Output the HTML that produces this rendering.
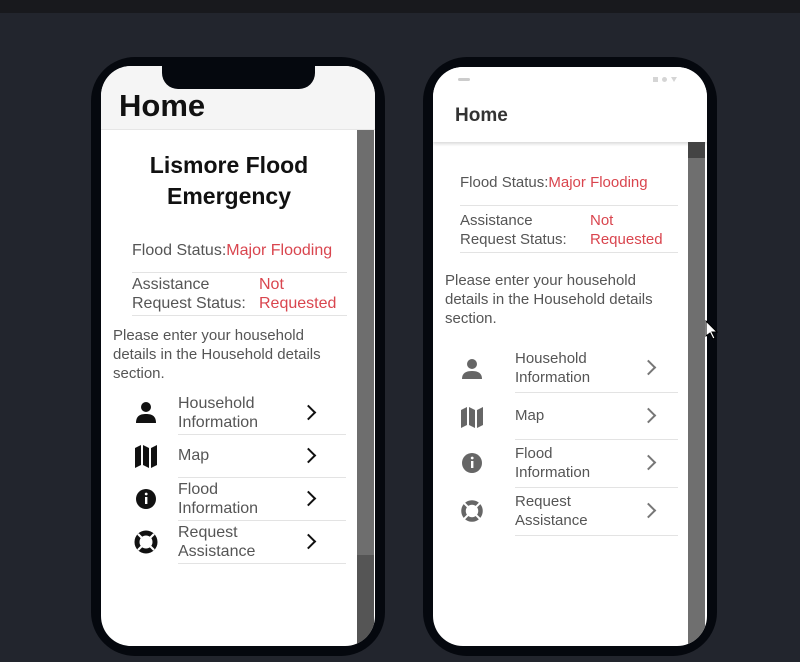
<!DOCTYPE html>
<html><head><style>
*{margin:0;padding:0;box-sizing:border-box}
body{width:800px;height:662px;background:#22252d;position:relative;overflow:hidden;font-family:"Liberation Sans",Roboto,sans-serif}
.a{position:absolute}
.top{left:0;top:0;width:800px;height:13px;background:#18191d}
.frame{background:#05080e;border-radius:44px}
.scr{background:#fff;border-radius:30px;overflow:hidden}
.t{position:absolute;white-space:nowrap;color:#555;font-weight:300}
.r{color:#d9454e}
.ln{position:absolute;height:1px;background:#e3e3e3}
.chev{position:absolute;width:11px;height:11px;border-right:2px solid #111;border-bottom:2px solid #111;transform:rotate(-45deg)}
</style></head><body>
<div class="a top"></div>

<!-- LEFT PHONE -->
<div class="a frame" style="left:91px;top:57px;width:294px;height:599px"></div>
<div class="a scr" style="left:101px;top:66px;width:274px;height:580px">
  <div class="a" style="left:0;top:0;width:274px;height:64px;background:#f5f5f5;border-bottom:1px solid #e6e6e6"></div>
  <div class="a" style="left:61px;top:0;width:153px;height:23px;background:#05080e;border-radius:0 0 16px 16px"></div>
  <div class="t" style="left:18px;top:22px;font-size:31px;font-weight:700;color:#111">Home</div>
  <div class="a" style="left:256px;top:64px;width:17px;height:516px;background:#6e6e6e"></div>
  <div class="a" style="left:256px;top:489px;width:17px;height:91px;background:#555"></div>
  <div class="t" style="left:0;width:256px;text-align:center;top:84px;font-size:23px;font-weight:700;color:#111;line-height:31px">Lismore Flood<br>Emergency</div>
  <div class="t" style="left:31px;top:176px;font-size:16px">Flood Status:<span class="r">Major Flooding</span></div>
  <div class="ln" style="left:31px;top:206px;width:215px"></div>
  <div class="t" style="left:31px;top:209px;font-size:16px;line-height:19px">Assistance<br>Request Status:</div>
  <div class="t r" style="left:158px;top:209px;font-size:16px;line-height:19px">Not<br>Requested</div>
  <div class="ln" style="left:31px;top:249px;width:215px"></div>
  <div class="t" style="left:12px;top:260px;font-size:15px;line-height:19px">Please enter your household<br>details in the Household details<br>section.</div>
  <div class="t" style="left:77px;top:328px;font-size:16px;line-height:19px">Household<br>Information</div>
  <div class="ln" style="left:77px;top:368px;width:168px"></div>
  <div class="t" style="left:77px;top:381px;font-size:16px">Map</div>
  <div class="ln" style="left:77px;top:411px;width:168px"></div>
  <div class="t" style="left:77px;top:414px;font-size:16px;line-height:19px">Flood<br>Information</div>
  <div class="ln" style="left:77px;top:454px;width:168px"></div>
  <div class="t" style="left:77px;top:457px;font-size:16px;line-height:19px">Request<br>Assistance</div>
  <div class="ln" style="left:77px;top:497px;width:168px"></div>
  <div class="chev" style="left:202px;top:341px"></div>
  <div class="chev" style="left:202px;top:384px"></div>
  <div class="chev" style="left:202px;top:427px"></div>
  <div class="chev" style="left:202px;top:470px"></div>
  <svg class="a" style="left:33px;top:335px" width="24" height="160" viewBox="0 0 24 160">
    <circle cx="12" cy="6" r="5" fill="#111"/><path d="M2 22c0-7 4-9 10-9s10 2 10 9z" fill="#111"/>
    <path d="M1 47l6-3v20l-6 3z M9 44l6 3v20l-6-3z M17 47l6-3v20l-6 3z" fill="#111"/>
    <circle cx="12" cy="98" r="10" fill="#111"/><rect x="11" y="96" width="2.4" height="7" fill="#fff"/><circle cx="12.2" cy="93" r="1.4" fill="#fff"/>
    <circle cx="12" cy="141" r="9" fill="none" stroke="#111" stroke-width="5"/><circle cx="12" cy="141" r="3" fill="#fff"/>
    <path d="M4 133l5 5M20 133l-5 5M4 149l5-5M20 149l-5-5" stroke="#fff" stroke-width="2.2"/>
  </svg>
</div>

<!-- RIGHT PHONE -->
<div class="a frame" style="left:423px;top:57px;width:294px;height:599px"></div>
<div class="a scr" style="left:433px;top:67px;width:274px;height:579px">
  <div class="a" style="left:0;top:0;width:274px;height:75px;background:#fff;box-shadow:0 2px 3px rgba(0,0,0,.15)"></div>
  <div class="a" style="left:25px;top:11px;width:12px;height:3px;background:#ccc;border-radius:2px"></div>
  <div class="a" style="left:220px;top:10px;width:5px;height:5px;background:#d5d5d5"></div>
  <div class="a" style="left:229px;top:10px;width:5px;height:5px;background:#d5d5d5;border-radius:50%"></div>
  <div class="a" style="left:238px;top:10px;width:0;height:0;border-left:3px solid transparent;border-right:3px solid transparent;border-top:5px solid #d5d5d5"></div>
  <div class="t" style="left:22px;top:38px;font-size:19px;font-weight:700;color:#333">Home</div>
  <div class="a" style="left:255px;top:75px;width:17px;height:504px;background:#6f6f6f"></div>
  <div class="a" style="left:255px;top:75px;width:17px;height:16px;background:#444"></div>
  <div class="t" style="left:27px;top:107px;font-size:15px">Flood Status:<span class="r">Major Flooding</span></div>
  <div class="ln" style="left:27px;top:138px;width:218px"></div>
  <div class="t" style="left:27px;top:144px;font-size:15px;line-height:19px">Assistance<br>Request Status:</div>
  <div class="t r" style="left:157px;top:144px;font-size:15px;line-height:19px">Not<br>Requested</div>
  <div class="ln" style="left:27px;top:185px;width:218px"></div>
  <div class="t" style="left:12px;top:204px;font-size:15px;line-height:19px">Please enter your household<br>details in the Household details<br>section.</div>
  <div class="t" style="left:82px;top:282px;font-size:15px;line-height:19px">Household<br>Information</div>
  <div class="ln" style="left:82px;top:325px;width:163px"></div>
  <div class="t" style="left:82px;top:340px;font-size:15px">Map</div>
  <div class="ln" style="left:82px;top:372px;width:163px"></div>
  <div class="t" style="left:82px;top:377px;font-size:15px;line-height:19px">Flood<br>Information</div>
  <div class="ln" style="left:82px;top:420px;width:163px"></div>
  <div class="t" style="left:82px;top:425px;font-size:15px;line-height:19px">Request<br>Assistance</div>
  <div class="ln" style="left:82px;top:468px;width:163px"></div>
  <div class="chev" style="left:210px;top:295px;border-color:#777"></div>
  <div class="chev" style="left:210px;top:343px;border-color:#777"></div>
  <div class="chev" style="left:210px;top:390px;border-color:#777"></div>
  <div class="chev" style="left:210px;top:438px;border-color:#777"></div>
  <svg class="a" style="left:28px;top:291px" width="22" height="170" viewBox="0 0 22 170">
    <circle cx="11" cy="6" r="5" fill="#666"/><path d="M1 21c0-6 4-8 10-8s10 2 10 8z" fill="#666"/>
    <path d="M0 52l6-3v18l-6 3z M8 49l6 3v18l-6-3z M16 52l6-3v18l-6 3z" fill="#666"/>
    <circle cx="11" cy="105" r="10" fill="#666"/><rect x="10" y="103" width="2.4" height="7" fill="#fff"/><circle cx="11.2" cy="100" r="1.4" fill="#fff"/>
    <circle cx="11" cy="153" r="8.5" fill="none" stroke="#666" stroke-width="4.5"/><circle cx="11" cy="153" r="3" fill="#fff"/>
    <path d="M3 145l5 5M19 145l-5 5M3 161l5-5M19 161l-5-5" stroke="#fff" stroke-width="2"/>
  </svg>
</div>
<svg class="a" style="left:705px;top:320px" width="14" height="20" viewBox="0 0 14 20"><path d="M1 1v15l4-3 3 6 2-1-3-6h5z" fill="#fff" stroke="#000" stroke-width="1"/></svg>
</body></html>
